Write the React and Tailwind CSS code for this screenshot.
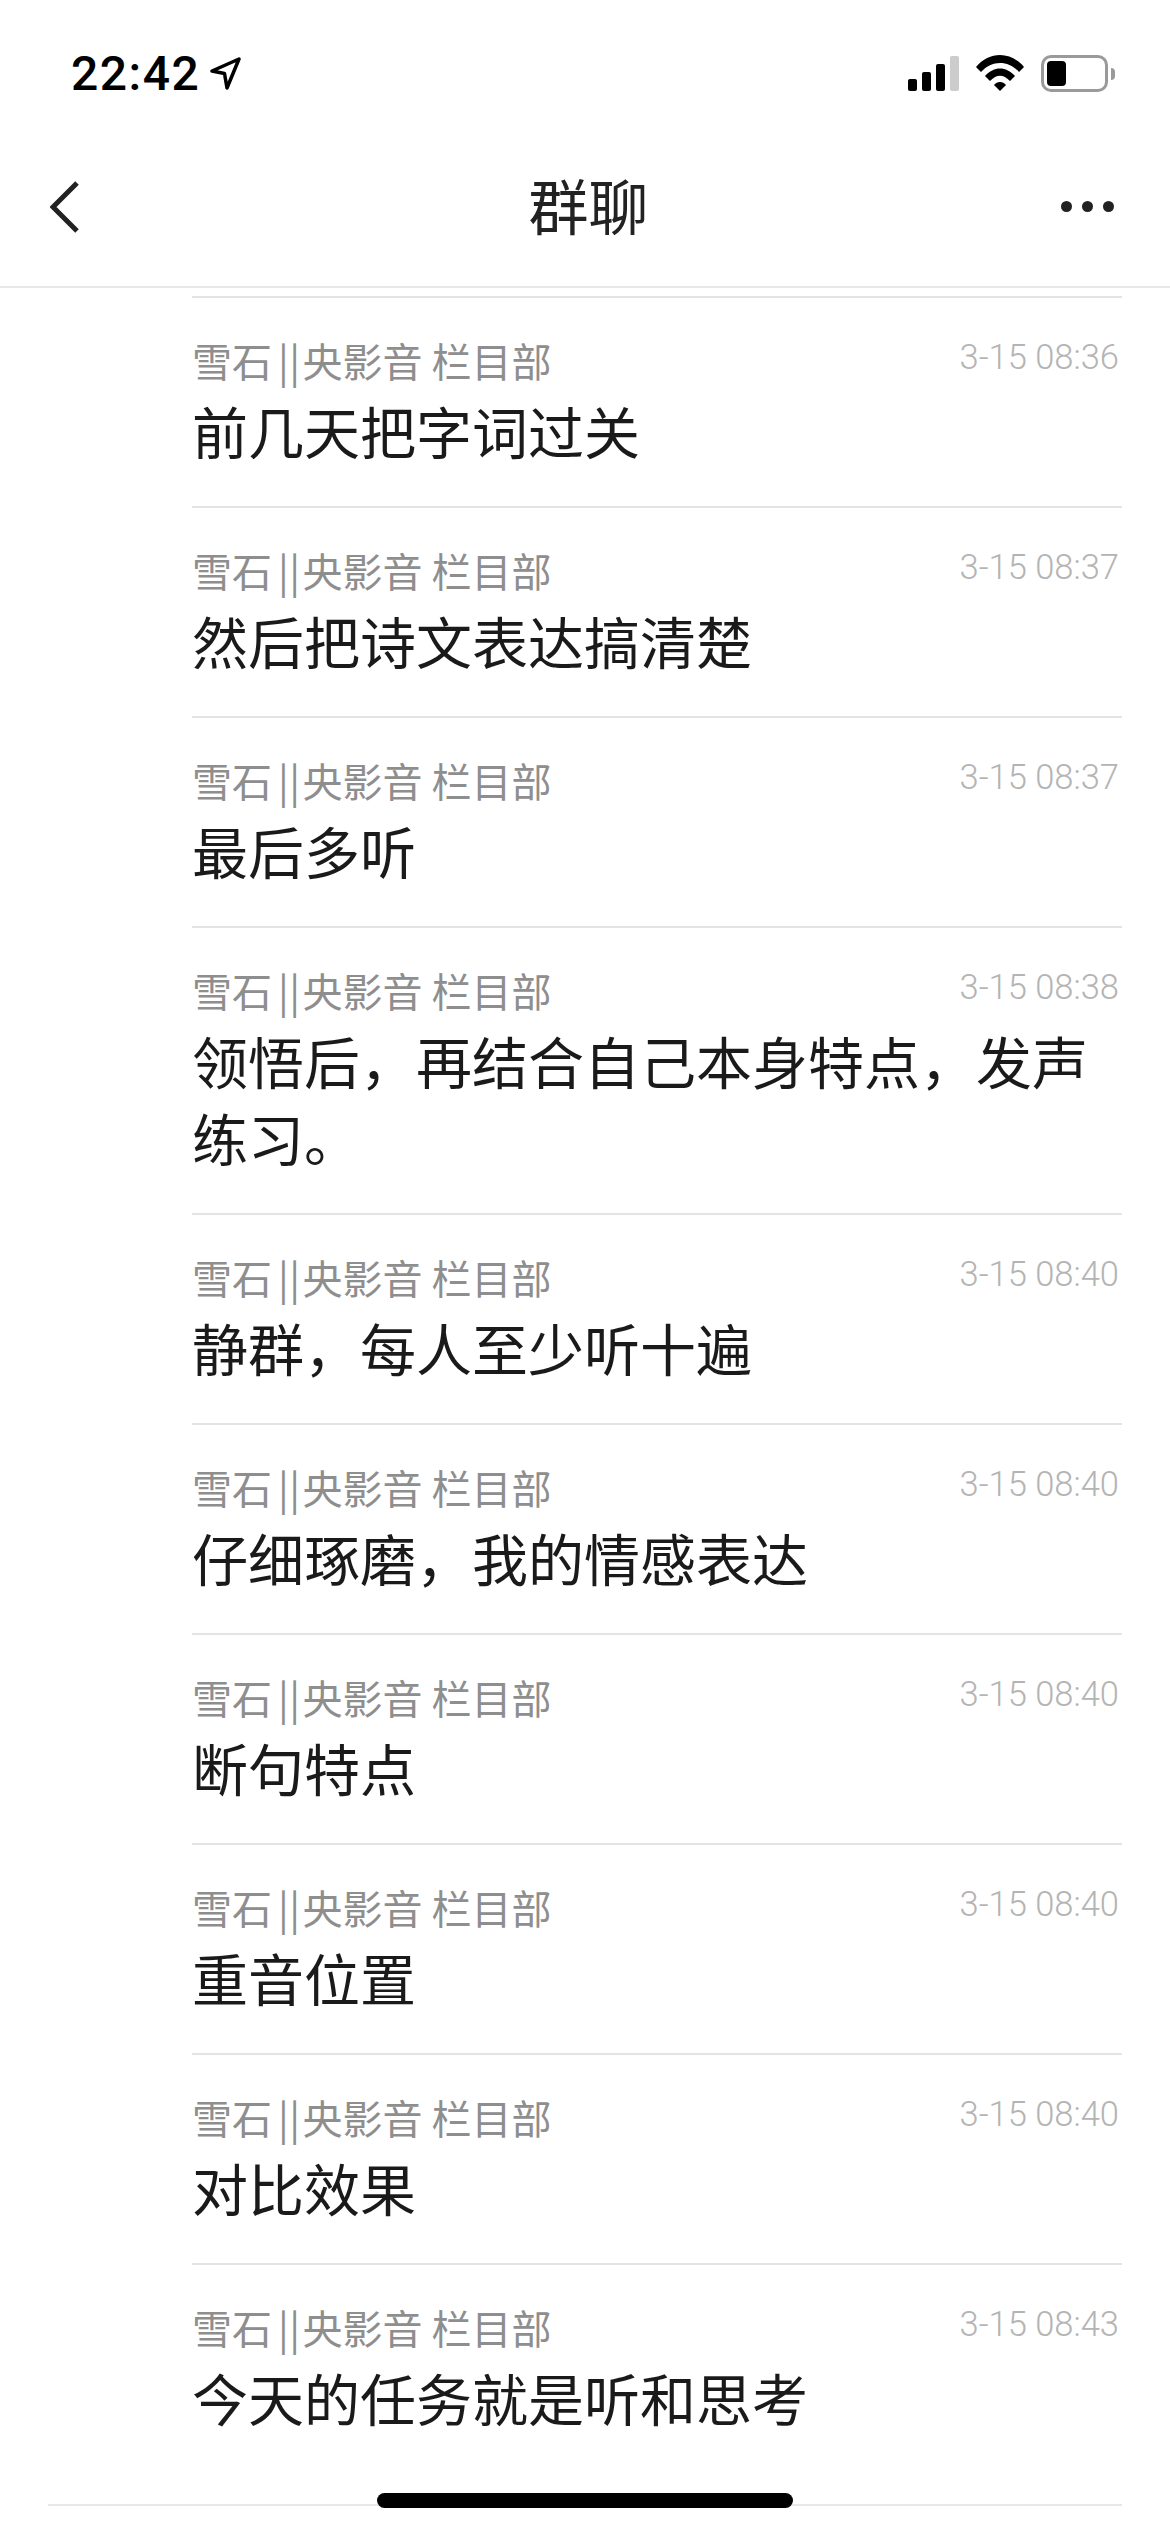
const cjk = "font-['Noto_Sans_CJK_SC','Noto_Sans',sans-serif]";

const messages = [
  { text: '前几天把字词过关', time: '3-15 08:36' },
  { text: '然后把诗文表达搞清楚', time: '3-15 08:37' },
  { text: '最后多听', time: '3-15 08:37' },
  { text: '领悟后，再结合自己本身特点，发声练习。', time: '3-15 08:38' },
  { text: '静群，每人至少听十遍', time: '3-15 08:40' },
  { text: '仔细琢磨，我的情感表达', time: '3-15 08:40' },
  { text: '断句特点', time: '3-15 08:40' },
  { text: '重音位置', time: '3-15 08:40' },
  { text: '对比效果', time: '3-15 08:40' },
  { text: '今天的任务就是听和思考', time: '3-15 08:43' },
];

function StatusBar() {
  return (
    <div className="flex h-[144px] items-start justify-between pl-[71px] pr-[55px] pt-[46px]">
      <div className="flex items-center gap-[10px]">
        <span className="font-['Roboto',sans-serif] text-[48px] font-medium leading-[55px] tracking-[1.5px] text-black">22:42</span>
        <svg width="31" height="33" viewBox="0 0 31 33" fill="none">
          <path d="M2 14 L29 2 L17 31 L14.5 16.5 Z" stroke="#000" strokeWidth="3.5" strokeLinejoin="round" />
        </svg>
      </div>
      <div className="flex items-start pt-[9px]">
        <div className="flex h-[36px] items-end gap-[5px]">
          <div className="h-[12px] w-[9px] rounded-[2px] bg-black" />
          <div className="h-[19px] w-[9px] rounded-[2px] bg-black" />
          <div className="h-[27px] w-[9px] rounded-[2px] bg-black" />
          <div className="h-[35px] w-[9px] rounded-[2px] bg-[#cccccc]" />
        </div>
        <svg className="ml-[17px] mt-[-1px]" width="48" height="37" viewBox="0 0 48 37" fill="none">
          <path d="M0 13 C13 -3 35 -3 48 13 L43 18 C32 6 16 6 5 18 Z" fill="#000" />
          <path d="M9 22 C18 12 30 12 39 22 L34 27 C27 20 21 20 14 27 Z" fill="#000" />
          <path d="M18 31 C21 27 27 27 30 31 L24 37 Z" fill="#000" />
        </svg>
        <div className="ml-[17px] flex items-center">
          <div className="h-[37px] w-[67px] rounded-[10px] border-[3px] border-[#9a9a9a] p-[3px]">
            <div className="h-full w-[19px] rounded-[4px] bg-black" />
          </div>
          <div className="ml-[3px] h-[12px] w-[4px] rounded-r-[4px] bg-[#9a9a9a]" />
        </div>
      </div>
    </div>
  );
}

function NavBar() {
  return (
    <div className="flex h-[144px] items-center justify-between border-b-2 border-[#e8e8e8] pb-[17px] pl-[50px] pr-[56px]">
      <div className="w-[60px]">
        <svg width="30" height="52" viewBox="0 0 30 52" fill="none">
          <path d="M27 2 L3 26 L27 50" stroke="#222" strokeWidth="5" />
        </svg>
      </div>
      <span className={`${cjk} ml-[6px] mt-[-6px] text-[60px] leading-[70px] text-[#222222]`}>群聊</span>
      <div className="flex w-[53px] gap-[10px]">
        <div className="size-[11px] rounded-full bg-[#222222]" />
        <div className="size-[11px] rounded-full bg-[#222222]" />
        <div className="size-[11px] rounded-full bg-[#222222]" />
      </div>
    </div>
  );
}

function MessageRow({ text, time }) {
  return (
    <div className="border-t-2 border-[#e3e3e3] pb-[38px] pt-[32px]">
      <div className="flex items-start justify-between">
        <span className={`${cjk} text-[40px] leading-[60px] text-[#8e8e8e]`}>
          雪石<span className="ml-[6px] mr-[2px] tracking-[0.5px]">||</span>央影音 栏目部
        </span>
        <span className="mr-[3px] font-['Roboto',sans-serif] text-[34.5px] font-light leading-[54px] text-[#b4b4b4]">{time}</span>
      </div>
      <p className={`${cjk} mt-[1px] text-[56px] leading-[77px] text-[#1a1a1a]`}>{text}</p>
    </div>
  );
}

export default function App() {
  return (
    <div className="relative h-[2532px] w-[1170px] overflow-hidden bg-white">
      <StatusBar />
      <NavBar />
      <div className="ml-[192px] mr-[48px] mt-[8px]">
        {messages.map((m, i) => (
          <MessageRow key={i} text={m.text} time={m.time} />
        ))}
      </div>
      <div className="ml-[48px] mr-[48px] mt-[31px] border-t-2 border-[#e8e8e8]" />
      <div className="absolute bottom-[24px] left-[377px] h-[15px] w-[416px] rounded-full bg-black" />
    </div>
  );
}
